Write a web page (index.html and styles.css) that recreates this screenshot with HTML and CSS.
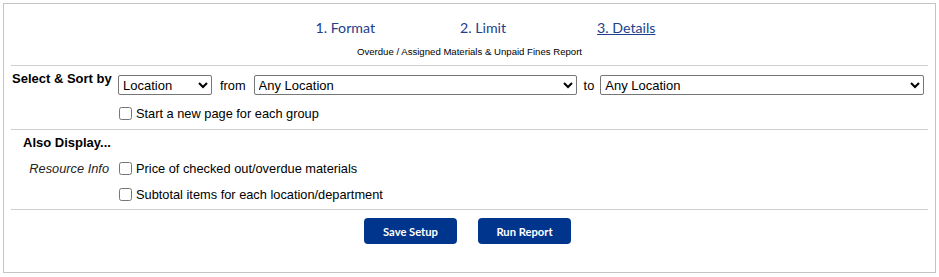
FILE: index.html
```html
<!DOCTYPE HTML>
<html>
    <head>
        <meta charset="UTF-8">
        <title>Report Details</title>
        <link rel="stylesheet" href="styles.css">
    </head>
    <body>
        <div id="wrap">
            <!--步骤-->
            <div class="steps">
                <a href="#">1. Format</a>
                <a href="#">2. Limit</a>
                <a href="#" class="current">3. Details</a>
            </div>
            <p class="subtitle">Overdue / Assigned Materials &amp; Unpaid Fines Report</p>

            <!--排序-->
            <div class="section sort">
                <div class="row">
                    <div class="label head">Select &amp; Sort by</div>
                    <div class="ctrl">
                        <select class="sel sel1"><option>Location</option></select>
                        <span class="word">from</span>
                        <select class="sel sel2"><option>Any Location</option></select>
                        <span class="word to">to</span>
                        <select class="sel sel3"><option>Any Location</option></select>
                    </div>
                </div>
                <div class="row">
                    <div class="label"></div>
                    <label class="ctrl"><input type="checkbox">Start a new page for each group</label>
                </div>
            </div>

            <!--其他显示-->
            <div class="section also">
                <p class="also-title">Also Display...</p>
                <div class="row">
                    <div class="label note">Resource Info</div>
                    <label class="ctrl"><input type="checkbox">Price of checked out/overdue materials</label>
                </div>
                <div class="row">
                    <div class="label"></div>
                    <label class="ctrl"><input type="checkbox">Subtotal items for each location/department</label>
                </div>
            </div>

            <!--按钮-->
            <div class="buttons">
                <button class="btn">Save Setup</button>
                <button class="btn">Run Report</button>
            </div>
        </div>
    </body>
</html>
```

FILE: styles.css
```css
body{margin:3px;font-family:"Liberation Sans",Arial,sans-serif;font-size:12.8px;color:#000;}
p{margin:0;}
#wrap{
    border:1px solid #c4c4c4;
    padding:14px 7px 28px;
}
.steps{
    display:flex;
    justify-content:center;
    padding-left:32px;
    height:20px;
    line-height:20px;
}
.steps a{
    font-family:Lato,"Open Sans",sans-serif;
    font-size:14.2px;
    color:#20408c;
    text-decoration:none;
    margin-right:85px;
}
.steps a:nth-child(2){margin-right:91px;}
.steps a:last-child{margin-right:0;}
.steps a.current{text-decoration:underline;}
.subtitle{
    margin-top:8px;
    height:12px;
    line-height:12px;
    font-size:9.6px;
    text-align:center;
}
.section{
    border-top:1px solid #cfcfcf;
    margin-top:7px;
}
.sort{padding:9px 0 6px;}
.also{margin-top:0;padding:5px 0 5px;}
.row{
    display:flex;
    align-items:center;
    height:20px;
}
.sort .row + .row{margin-top:8px;}
.also .row{margin-top:7px;}
.also .row + .row{margin-top:6px;}
.label{
    width:104px;
    flex:none;
}
.label.head{
    align-self:flex-start;
    padding-left:1px;
    width:103px;
    font-weight:bold;
    font-size:13px;
    line-height:14px;
    margin-top:-3px;
}
.label.note{
    font-style:italic;
    text-align:right;
    padding-right:6px;
    width:98px;
    color:#222;
}
.ctrl{
    display:flex;
    align-items:center;
}
.sel{
    height:20px;
    font-family:"Liberation Sans",Arial,sans-serif;
    font-size:13px;
    border:1px solid #767676;
    border-radius:2px;
    background:#fff;
    color:#000;
    margin:0;
}
.sel1{width:94px;margin-left:3px;}
.sel2{width:323px;}
.sel3{width:324px;}
.word{margin:0 8px;}
.word.to{margin:0 6px 0 7px;}
.ctrl input{margin:3px 4px 3px 4px;width:13px;height:13px;}
.also-title{
    padding-left:12px;
    font-weight:bold;
    font-size:13px;
    line-height:16px;
}
.buttons{
    border-top:1px solid #cfcfcf;
    padding:8px 4px 0 0;
    display:flex;
    justify-content:center;
    gap:21px;
}
.btn{
    width:93px;
    height:26px;
    border:none;
    border-radius:4px;
    background-color:#00358e;
    color:#fff;
    font-family:Lato,"Open Sans",sans-serif;
    font-weight:bold;
    font-size:11.2px;
    cursor:pointer;
}
```
